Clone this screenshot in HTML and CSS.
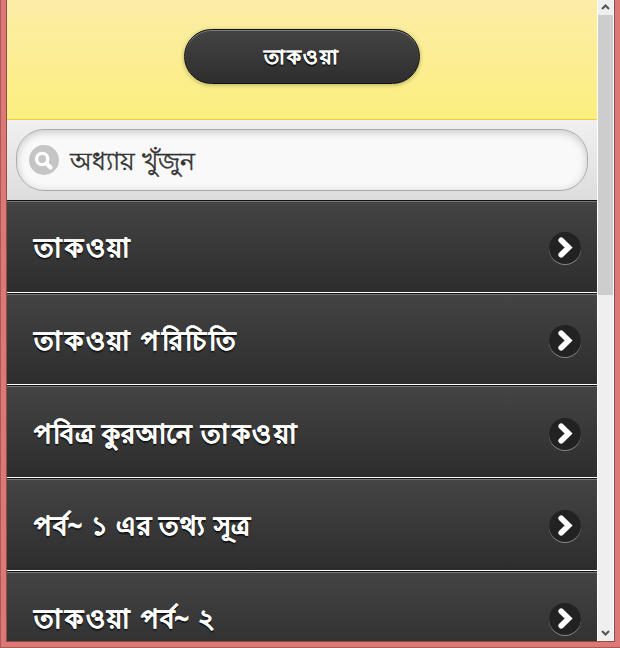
FILE: index.html
```html
<!DOCTYPE html>
<html lang="bn">
<head>
  <meta charset="UTF-8" />
  <meta name="viewport" content="width=device-width, initial-scale=1.0"/>
  <title>তাকওয়া</title>
  <link rel="stylesheet" href="styles.css">
</head>
<body>
  <div class="window">
    <div class="page">
      <header>
        <button class="title-btn">তাকওয়া</button>
      </header>

      <div class="search-bar">
        <div class="search-box">
          <svg class="search-icon" width="30" height="30" viewBox="0 0 30 30">
            <circle cx="15" cy="15" r="15" fill="#c5c5c5"/>
            <circle cx="13.2" cy="14" r="5.6" fill="none" stroke="#fff" stroke-width="3.4"/>
            <path d="M17.5 18.5l4 4" stroke="#fff" stroke-width="4" stroke-linecap="round"/>
          </svg>
          <span class="placeholder">অধ্যায় খুঁজুন</span>
        </div>
      </div>

      <ul class="chapters">
        <li>
          <a class="wide">তাকওয়া</a>
          <span class="arrow"><svg width="32" height="32" viewBox="0 0 32 32"><path d="M12.2 8.2l7.4 7.3-7.4 7.3"/></svg></span>
        </li>
        <li>
          <a class="wide">তাকওয়া পরিচিতি</a>
          <span class="arrow"><svg width="32" height="32" viewBox="0 0 32 32"><path d="M12.2 8.2l7.4 7.3-7.4 7.3"/></svg></span>
        </li>
        <li>
          <a>পবিত্র কুরআনে <span class="wide">তাকওয়া</span></a>
          <span class="arrow"><svg width="32" height="32" viewBox="0 0 32 32"><path d="M12.2 8.2l7.4 7.3-7.4 7.3"/></svg></span>
        </li>
        <li>
          <a>পর্ব~ ১ এর তথ্য সূত্র</a>
          <span class="arrow"><svg width="32" height="32" viewBox="0 0 32 32"><path d="M12.2 8.2l7.4 7.3-7.4 7.3"/></svg></span>
        </li>
        <li>
          <a><span class="wide">তাকওয়া</span> পর্ব~ ২</a>
          <span class="arrow"><svg width="32" height="32" viewBox="0 0 32 32"><path d="M12.2 8.2l7.4 7.3-7.4 7.3"/></svg></span>
        </li>
      </ul>
    </div>

    <div class="scrollbar">
      <svg class="scroll-arrow" width="15" height="15" viewBox="0 0 15 15"><path d="M4 9l3.5-3.5L11 9"/></svg>
      <div class="thumb"></div>
      <svg class="scroll-arrow down" width="15" height="15" viewBox="0 0 15 15"><path d="M4 5l3.5 3.5L11 5"/></svg>
    </div>
  </div>
</body>
</html>
```
FILE: styles.css
```css
* { box-sizing: border-box; }

body {
  margin: 0;
  height: 648px;
  padding: 0 5px 5px;
  background: #dd7876;
  border-left: 1px solid #a85a5a;
  border-bottom: 1px solid #a85a5a;
  font-family: "Noto Sans", sans-serif;
  overflow: hidden;
}

.window {
  display: flex;
  height: 642px;
  border: 1px solid #8e4c4b;
  border-top: none;
  background: #fff;
  overflow: hidden;
}

.page {
  width: 590px;
  flex: none;
  overflow: hidden;
}

header {
  height: 120px;
  padding-top: 29px;
  border-bottom: 1px solid #f7c942;
  background: linear-gradient(#fceda7, #fbef7e);
  text-align: center;
}

.title-btn {
  display: block;
  width: 236px;
  height: 55px;
  margin-left: 177px;
  padding: 4px 0 0;
  border: 1px solid #111;
  border-radius: 28px;
  background: linear-gradient(#444, #2d2d2d);
  box-shadow: inset 0 1px 0 rgba(255,255,255,0.3), 0 1px 4px rgba(0,0,0,0.3);
  color: #fff;
  font: bold 20px "Noto Sans", sans-serif;
  letter-spacing: 1.9px;
  -webkit-text-stroke: 0.3px #fff;
  text-shadow: 0 2px 1px #111;
}

.search-bar {
  height: 80px;
  padding: 9px;
  background: linear-gradient(#f0f0f0, #ddd);
}

.search-box {
  display: flex;
  align-items: center;
  height: 62px;
  padding-left: 12px;
  border: 1px solid #aaa;
  border-radius: 28px;
  background: #f9f9f9;
  box-shadow: inset 0 2px 8px rgba(0,0,0,0.2);
}

.placeholder {
  margin-left: 11px;
  padding-top: 7px;
  color: #333;
  font-size: 25px;
  letter-spacing: 0.1px;
  -webkit-text-stroke: 0.4px #333;
}

.chapters {
  list-style: none;
  margin: 0;
  padding: 0;
}

.chapters li {
  display: flex;
  align-items: center;
  justify-content: space-between;
  height: 92.67px;
  padding: 4px 16px 0 27px;
  border-top: 1px solid #111;
  border-bottom: 1px solid #fff;
  background: linear-gradient(#444, #2d2d2d);
  box-shadow: inset 0 1px 0 #777;
}

.chapters a {
  padding-top: 4px;
  color: #fff;
  font-size: 26px;
  font-weight: bold;
  letter-spacing: 0.8px;
  -webkit-text-stroke: 0.5px #fff;
  text-shadow: 0 2px 1px #111;
  white-space: nowrap;
}

.chapters .wide {
  letter-spacing: 2.8px;
  word-spacing: -2px;
}

.arrow {
  width: 32px;
  height: 32px;
  border-radius: 50%;
  background: #222;
  box-shadow: 0 1px 0 rgba(255,255,255,0.4);
}

.arrow svg {
  display: block;
}

.arrow path {
  fill: none;
  stroke: #fff;
  stroke-width: 5.6;
  stroke-linecap: round;
}

.scrollbar {
  display: flex;
  flex-direction: column;
  width: 15px;
  margin-left: 1px;
  background: #efefef;
}

.thumb {
  height: 280px;
  background: #cdcdcd;
}

.scroll-arrow path {
  fill: none;
  stroke: #555;
  stroke-width: 2;
}

.down {
  margin-top: auto;
}
```
